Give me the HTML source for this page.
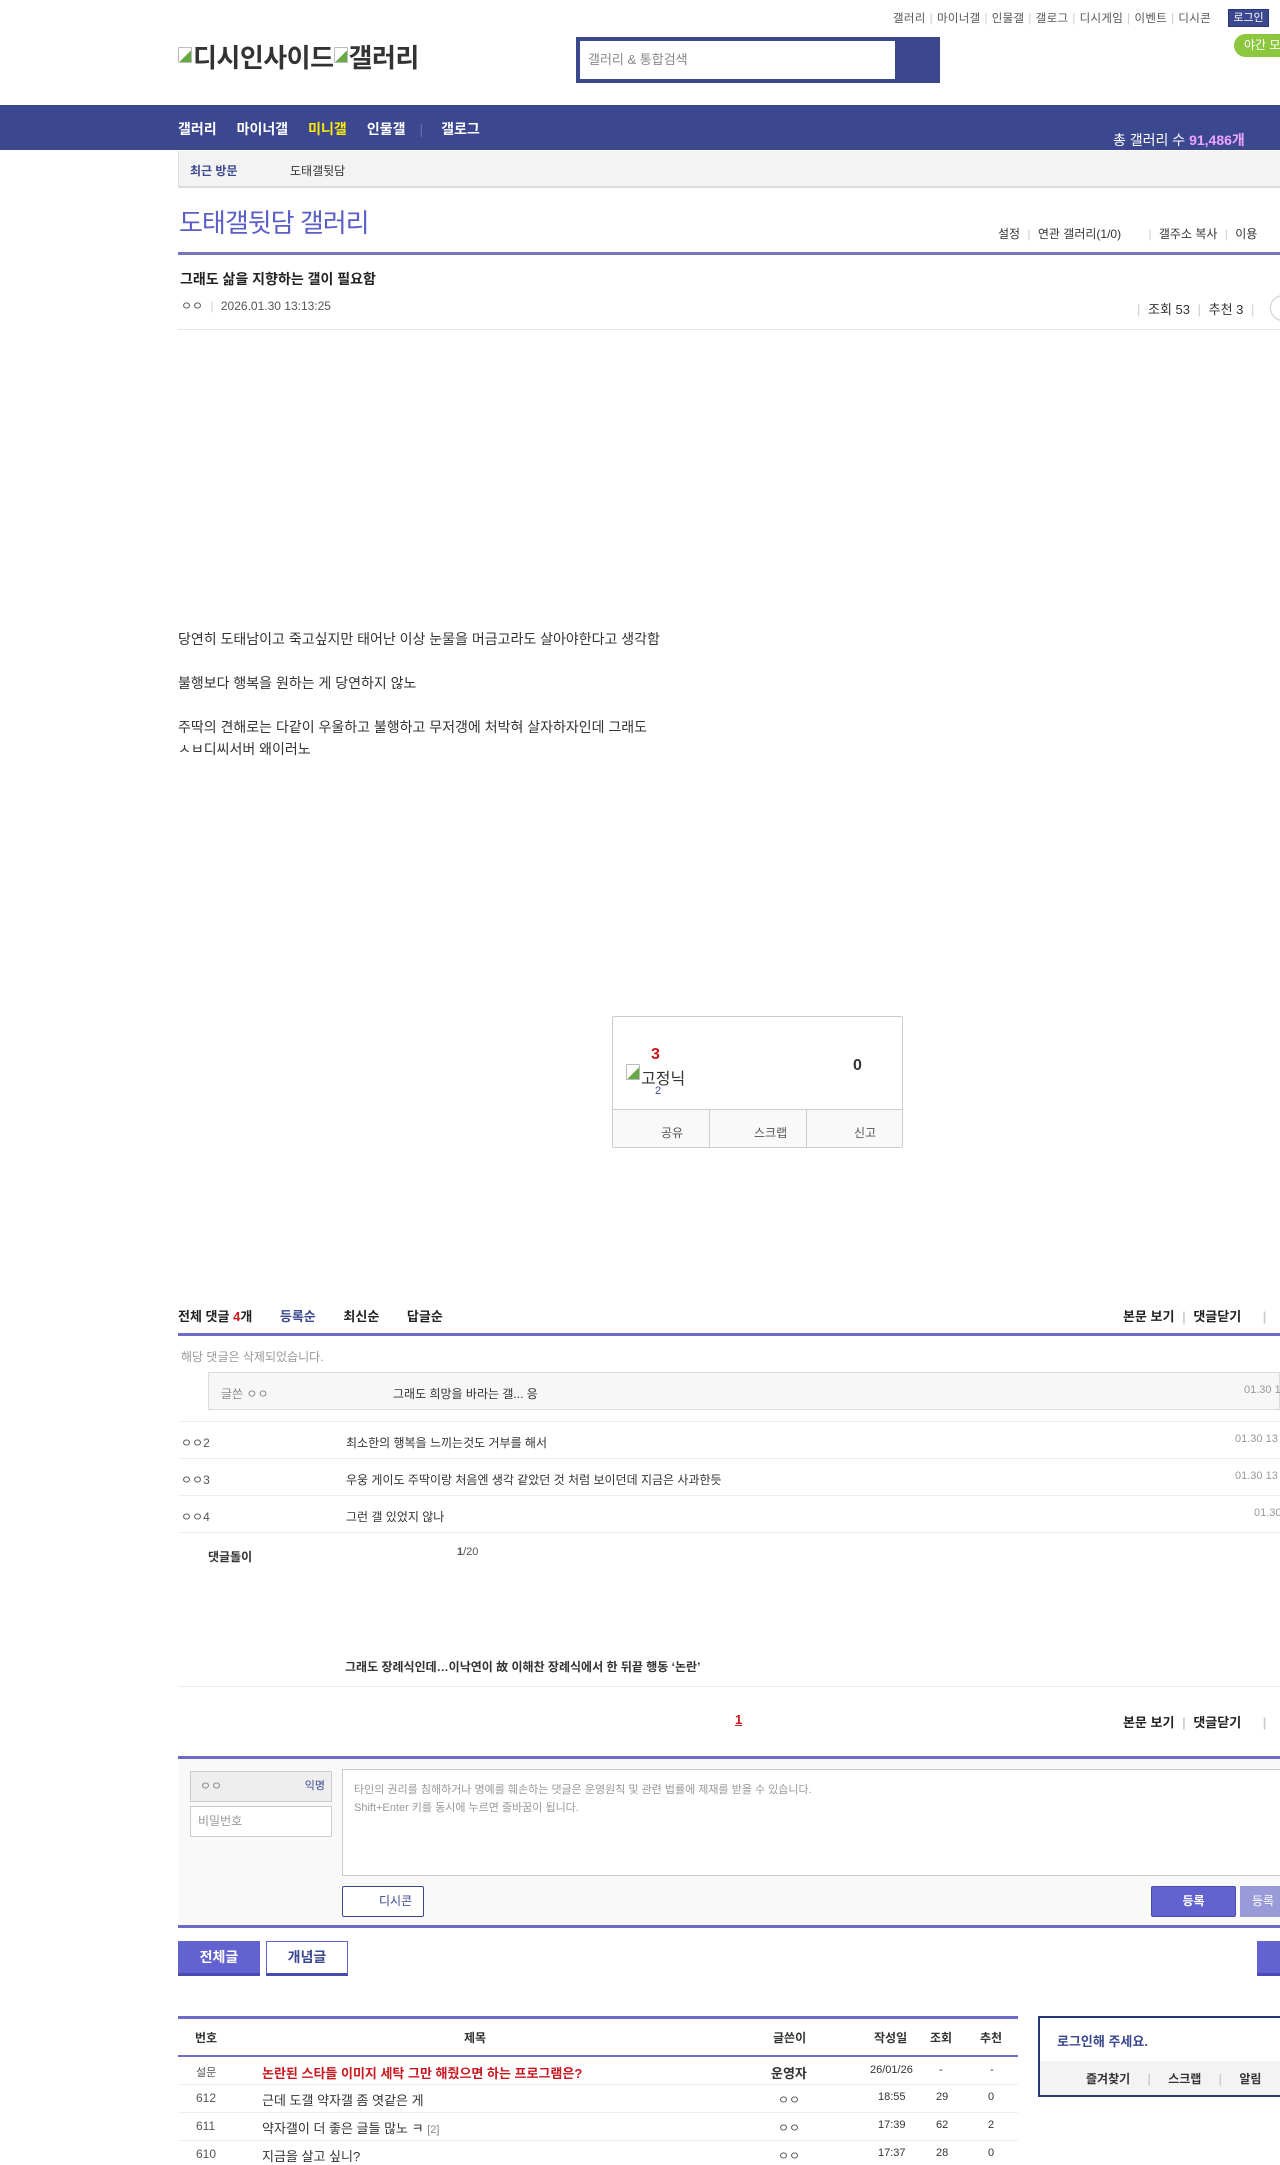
<!DOCTYPE html>
<html><head><meta charset="utf-8">
<style>
*{margin:0;padding:0;box-sizing:border-box}
body{width:1280px;height:2160px;overflow:hidden;background:#fff;position:relative;font-family:"Liberation Sans","Noto Sans CJK KR",sans-serif;color:#333;font-size:13px}
.a{position:absolute;white-space:nowrap}
.sep{color:#ccc;margin:0 4px}
.bi{display:inline-block;width:14px;height:16px;border:1px solid #bbb;border-radius:1px;vertical-align:4px;margin-right:1px;background:linear-gradient(135deg,#fff 55%,#6a4 56%)}
</style></head><body>
<div class="a" style="left:893px;top:10px;font-size:11.5px;color:#555;letter-spacing:0.3px">갤러리<span class="sep">|</span>마이너갤<span class="sep">|</span>인물갤<span class="sep">|</span>갤로그<span class="sep">|</span>디시게임<span class="sep">|</span>이벤트<span class="sep">|</span>디시콘</div>
<div class="a" style="left:1228px;top:9px;width:41px;height:18px;background:#3b4890;border:1px solid #29367c;color:#fff;font-size:11px;text-align:center;line-height:16px">로그인</div>
<div class="a" style="left:1234px;top:34px;width:60px;height:23px;background:#8dc63f;border-radius:12px;color:#fff;font-size:12px;line-height:23px;padding-left:10px">야간 모드</div>
<div class="a" style="left:178px;top:38px;font-size:26px;font-weight:bold;color:#333;letter-spacing:-0.5px"><span class="bi"></span>디시인사이드<span class="bi"></span>갤러리</div>
<div class="a" style="left:576px;top:37px;width:364px;height:46px;background:#3b4890"></div>
<div class="a" style="left:580px;top:41px;width:315px;height:38px;background:#fff;color:#888;font-size:13px;line-height:38px;padding-left:8px">갤러리 &amp; 통합검색</div>
<div class="a" style="left:0;top:105px;width:1280px;height:45px;background:#3b4890"></div>
<div class="a" style="left:178px;top:119px;font-size:14px;font-weight:bold;color:#fff"><span>갤러리</span><span style="margin-left:20px">마이너갤</span><span style="margin-left:20px;color:#ffeb00">미니갤</span><span style="margin-left:20px">인물갤</span><span style="margin-left:14px;color:#6470b0;font-weight:normal">|</span><span style="margin-left:18px">갤로그</span></div>
<div class="a" style="left:1113px;top:130px;font-size:14px;color:#fff">총 갤러리 수 <b style="color:#f0a4ff">91,486개</b></div>
<div class="a" style="left:178px;top:151px;width:1102px;height:37px;background:#f3f3f3;border-left:1px solid #ddd;border-bottom:2px solid #dcdcdc"></div>
<div class="a" style="left:190px;top:162px;font-size:12px;color:#3b4890;font-weight:bold">최근 방문</div>
<div class="a" style="left:290px;top:162px;font-size:12px;color:#333">도태갤뒷담</div>
<div class="a" style="left:179px;top:203px;font-size:26px;color:#5a5ec6;letter-spacing:-1px">도태갤뒷담 갤러리</div>
<div class="a" style="left:998px;top:225px;font-size:12px;color:#333">설정 <span class="sep">|</span> 연관 갤러리(1/0) <span class="sep" style="margin-left:24px">|</span> 갤주소 복사 <span class="sep">|</span> 이용</div>
<div class="a" style="left:178px;top:252px;width:1102px;height:3px;background:#7774c0"></div>
<div class="a" style="left:180px;top:269px;font-size:14px;font-weight:bold;color:#222">그래도 삶을 지향하는 갤이 필요함</div>
<div class="a" style="left:181px;top:297px;font-size:12px;color:#555">ㅇㅇ <span class="sep">|</span> 2026.01.30 13:13:25</div>
<div class="a" style="left:1133px;top:299px;font-size:13px;color:#333"><span class="sep">|</span> 조회 53 <span class="sep">|</span> 추천 3 <span class="sep">|</span></div>
<div class="a" style="left:1270px;top:295px;width:26px;height:26px;border:1px solid #ccc;border-radius:13px"></div>
<div class="a" style="left:178px;top:329px;width:1102px;height:1px;background:#e5e5e5"></div>
<div class="a" style="left:178px;top:628px;font-size:14px;line-height:22px;color:#333">당연히 도태남이고 죽고싶지만 태어난 이상 눈물을 머금고라도 살아야한다고 생각함<br><br>불행보다 행복을 원하는 게 당연하지 않노<br><br>주딱의 견해로는 다같이 우울하고 불행하고 무저갱에 처박혀 살자하자인데 그래도<br>ㅅㅂ디씨서버 왜이러노</div>
<div class="a" style="left:612px;top:1016px;width:291px;height:132px;border:1px solid #ccc;border-radius:2px"></div>
<div class="a" style="left:613px;top:1109px;width:289px;height:38px;background:#f9f9f9;border-top:1px solid #ccc"></div>
<div class="a" style="left:709px;top:1110px;width:1px;height:38px;background:#ccc"></div>
<div class="a" style="left:806px;top:1110px;width:1px;height:38px;background:#ccc"></div>
<div class="a" style="left:661px;top:1124px;font-size:12px;color:#555">공유</div>
<div class="a" style="left:754px;top:1124px;font-size:12px;color:#555">스크랩</div>
<div class="a" style="left:854px;top:1124px;font-size:12px;color:#555">신고</div>
<div class="a" style="left:651px;top:1046px;font-size:16px;font-weight:bold;color:#c8171e">3</div>
<div class="a" style="left:626px;top:1064px;font-size:16px;color:#333"><span class="bi"></span>고정닉</div>
<div class="a" style="left:655px;top:1085px;font-size:11px;color:#3b4890">2</div>
<div class="a" style="left:853px;top:1057px;font-size:16px;font-weight:bold;color:#333">0</div>
<div class="a" style="left:178px;top:1306px;font-size:13px;font-weight:bold;color:#222">전체 댓글 <span style="color:#c8171e">4</span>개 <span style="margin-left:24px;color:#3b4890">등록순</span> <span style="margin-left:24px">최신순</span> <span style="margin-left:24px">답글순</span></div>
<div class="a" style="left:1123px;top:1306px;font-size:13px;font-weight:bold;color:#222">본문 보기 <span class="sep">|</span> 댓글닫기 <span class="sep" style="margin-left:18px">|</span></div>
<div class="a" style="left:178px;top:1333px;width:1102px;height:3px;background:#6c6bc8"></div>
<div class="a" style="left:181px;top:1348px;font-size:12px;color:#999">해당 댓글은 삭제되었습니다.</div>
<div class="a" style="left:208px;top:1372px;width:1072px;height:38px;background:#f7f7f7;border:1px solid #ddd"></div>
<div class="a" style="left:221px;top:1385px;font-size:12px;color:#888">글쓴 ㅇㅇ</div>
<div class="a" style="left:393px;top:1385px;font-size:12px;color:#333">그래도 희망을 바라는 갤... 응</div>
<div class="a" style="left:1244px;top:1384px;font-size:11px;color:#999">01.30 1</div>
<div class="a" style="left:178px;top:1421px;width:1102px;height:1px;background:#eee"></div>
<div class="a" style="left:178px;top:1458px;width:1102px;height:1px;background:#eee"></div>
<div class="a" style="left:178px;top:1495px;width:1102px;height:1px;background:#eee"></div>
<div class="a" style="left:178px;top:1532px;width:1102px;height:1px;background:#eee"></div>
<div class="a" style="left:181px;top:1434px;font-size:12px;color:#555">ㅇㅇ2</div>
<div class="a" style="left:346px;top:1434px;font-size:12px;color:#333">최소한의 행복을 느끼는것도 거부를 해서</div>
<div class="a" style="left:1235px;top:1433px;font-size:11px;color:#999">01.30 13</div>
<div class="a" style="left:181px;top:1471px;font-size:12px;color:#555">ㅇㅇ3</div>
<div class="a" style="left:346px;top:1471px;font-size:12px;color:#333">우웅 게이도 주딱이랑 처음엔 생각 같았던 것 처럼 보이던데 지금은 사과한듯</div>
<div class="a" style="left:1235px;top:1470px;font-size:11px;color:#999">01.30 13</div>
<div class="a" style="left:181px;top:1508px;font-size:12px;color:#555">ㅇㅇ4</div>
<div class="a" style="left:346px;top:1508px;font-size:12px;color:#333">그런 갤 있었지 않나</div>
<div class="a" style="left:1254px;top:1507px;font-size:11px;color:#999">01.30</div>
<div class="a" style="left:208px;top:1548px;font-size:12px;font-weight:bold;color:#333">댓글돌이</div>
<div class="a" style="left:457px;top:1546px;font-size:11px;color:#555"><b>1</b>/20</div>
<div class="a" style="left:345px;top:1658px;font-size:12px;font-weight:bold;color:#333">그래도 장례식인데…이낙연이 故 이해찬 장례식에서 한 뒤끝 행동 ‘논란’</div>
<div class="a" style="left:178px;top:1686px;width:1102px;height:1px;background:#eee"></div>
<div class="a" style="left:735px;top:1712px;font-size:13px;font-weight:bold;color:#c8171e;text-decoration:underline">1</div>
<div class="a" style="left:1123px;top:1712px;font-size:13px;font-weight:bold;color:#222">본문 보기 <span class="sep">|</span> 댓글닫기 <span class="sep" style="margin-left:18px">|</span></div>
<div class="a" style="left:178px;top:1756px;width:1102px;height:172px;background:#f9f9f9;border-top:3px solid #6c6bc8;border-bottom:3px solid #6c6bc8"></div>
<div class="a" style="left:190px;top:1771px;width:142px;height:31px;background:#eee;border:1px solid #ccc;font-size:12px;color:#888;line-height:29px;padding-left:9px">ㅇㅇ<span style="position:absolute;right:6px;color:#3b4890;font-size:11px">익명</span></div>
<div class="a" style="left:190px;top:1806px;width:142px;height:31px;background:#fff;border:1px solid #ccc;font-size:12px;color:#999;line-height:29px;padding-left:7px">비밀번호</div>
<div class="a" style="left:342px;top:1769px;width:950px;height:107px;background:#fff;border:1px solid #ccc;font-size:11px;color:#999;line-height:18px;padding:11px 11px">타인의 권리를 침해하거나 명예를 훼손하는 댓글은 운영원칙 및 관련 법률에 제재를 받을 수 있습니다.<br>Shift+Enter 키를 동시에 누르면 줄바꿈이 됩니다.</div>
<div class="a" style="left:342px;top:1886px;width:82px;height:31px;background:#fff;border:1px solid #3b4890;border-radius:2px;font-size:12px;color:#3b4890;line-height:29px;padding-left:36px">디시콘</div>
<div class="a" style="left:1151px;top:1886px;width:85px;height:31px;background:#6262d0;border:1px solid #4b4bb0;color:#fff;font-size:12px;font-weight:bold;text-align:center;line-height:29px;border-radius:2px">등록</div>
<div class="a" style="left:1240px;top:1886px;width:60px;height:31px;background:#9a9ad8;color:#fff;font-size:12px;line-height:31px;padding-left:12px">등록</div>
<div class="a" style="left:178px;top:1941px;width:82px;height:35px;background:#6262d0;border-bottom:3px solid #4a4ab0;color:#fff;font-size:14px;font-weight:bold;text-align:center;line-height:33px">전체글</div>
<div class="a" style="left:266px;top:1941px;width:82px;height:35px;background:#fff;border:1px solid #6262d0;border-bottom:3px solid #4a4ab0;color:#3b4890;font-size:14px;font-weight:bold;text-align:center;line-height:31px">개념글</div>
<div class="a" style="left:1257px;top:1941px;width:40px;height:35px;background:#6262d0;border-bottom:3px solid #4a4ab0"></div>
<div class="a" style="left:178px;top:2016px;width:840px;height:3px;background:#6c6bc8"></div>
<div class="a" style="left:178px;top:2055px;width:840px;height:2px;background:#6c6bc8"></div>
<div class="a" style="left:195px;top:2029px;font-size:12px;font-weight:bold;color:#333">번호</div>
<div class="a" style="left:464px;top:2029px;font-size:12px;font-weight:bold;color:#333">제목</div>
<div class="a" style="left:773px;top:2029px;font-size:12px;font-weight:bold;color:#333">글쓴이</div>
<div class="a" style="left:874px;top:2029px;font-size:12px;font-weight:bold;color:#333">작성일</div>
<div class="a" style="left:930px;top:2029px;font-size:12px;font-weight:bold;color:#333">조회</div>
<div class="a" style="left:980px;top:2029px;font-size:12px;font-weight:bold;color:#333">추천</div>
<div class="a" style="left:178px;top:2084px;width:840px;height:1px;background:#eee"></div>
<div class="a" style="left:178px;top:2112px;width:840px;height:1px;background:#eee"></div>
<div class="a" style="left:178px;top:2140px;width:840px;height:1px;background:#eee"></div>
<div class="a" style="left:196px;top:2064px;font-size:11px;color:#555">설문</div>
<div class="a" style="left:262px;top:2063px;font-size:13px;font-weight:bold;color:#c8171e">논란된 스타들 이미지 세탁 그만 해줬으면 하는 프로그램은?</div>
<div class="a" style="left:771px;top:2063px;font-size:13px;font-weight:bold;color:#333">운영자</div>
<div class="a" style="left:870px;top:2064px;font-size:11px;color:#333">26/01/26</div>
<div class="a" style="left:939px;top:2064px;font-size:11px">-</div>
<div class="a" style="left:990px;top:2064px;font-size:11px">-</div>
<div class="a" style="left:196px;top:2091px;font-size:12px;color:#555">612</div>
<div class="a" style="left:262px;top:2090px;font-size:13px;color:#333">근데 도갤 약자갤 좀 엿같은 게</div>
<div class="a" style="left:778px;top:2091px;font-size:12px;color:#555">ㅇㅇ</div>
<div class="a" style="left:878px;top:2091px;font-size:11px;color:#333">18:55</div>
<div class="a" style="left:936px;top:2091px;font-size:11px">29</div>
<div class="a" style="left:988px;top:2091px;font-size:11px">0</div>
<div class="a" style="left:196px;top:2119px;font-size:12px;color:#555">611</div>
<div class="a" style="left:262px;top:2118px;font-size:13px;color:#333">약자갤이 더 좋은 글들 많노 ㅋ <span style="font-size:11px;color:#888">[2]</span></div>
<div class="a" style="left:778px;top:2119px;font-size:12px;color:#555">ㅇㅇ</div>
<div class="a" style="left:878px;top:2119px;font-size:11px;color:#333">17:39</div>
<div class="a" style="left:936px;top:2119px;font-size:11px">62</div>
<div class="a" style="left:988px;top:2119px;font-size:11px">2</div>
<div class="a" style="left:196px;top:2147px;font-size:12px;color:#555">610</div>
<div class="a" style="left:262px;top:2146px;font-size:13px;color:#333">지금을 살고 싶니?</div>
<div class="a" style="left:778px;top:2147px;font-size:12px;color:#555">ㅇㅇ</div>
<div class="a" style="left:878px;top:2147px;font-size:11px;color:#333">17:37</div>
<div class="a" style="left:936px;top:2147px;font-size:11px">28</div>
<div class="a" style="left:988px;top:2147px;font-size:11px">0</div>
<div class="a" style="left:1038px;top:2016px;width:260px;height:81px;border:2px solid #29367c;border-right:none"></div>
<div class="a" style="left:1040px;top:2061px;width:240px;height:34px;background:#f3f3f3"></div>
<div class="a" style="left:1057px;top:2031px;font-size:13px;font-weight:bold;color:#3b4890">로그인해 주세요.</div>
<div class="a" style="left:1086px;top:2070px;font-size:12px;font-weight:bold;color:#333">즐겨찾기 <span class="sep" style="margin:0 14px">|</span> 스크랩 <span class="sep" style="margin:0 14px">|</span> 알림</div>
</body></html>
